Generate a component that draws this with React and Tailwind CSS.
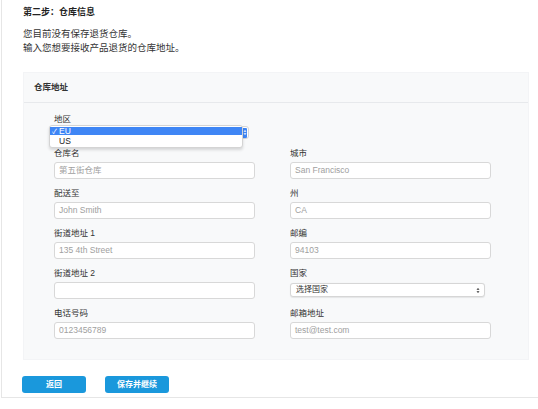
import React from 'react'

const font = { fontFamily: '"Liberation Sans", "Noto Sans CJK SC", sans-serif' }

function Stepper() {
  return (
    <svg width="4" height="7" viewBox="0 0 4 7" className="shrink-0">
      <path d="M0.5 2.8 L2 1 L3.5 2.8 Z" fill="#333" />
      <path d="M0.5 4.2 L2 6 L3.5 4.2 Z" fill="#333" />
    </svg>
  )
}

function Field({ label, placeholder, select }) {
  return (
    <div className="flex flex-col">
      <div className="h-[10px] leading-[10px] text-[8.5px] text-[#333] mb-[4px]">{label}</div>
      {select ? (
        <div className="w-[195px] h-[14px] mt-[1px] mb-[2px] bg-white border border-[#d6d6d6] rounded-[3px] flex items-center justify-between pl-[5px] pr-[4px] text-[8px] text-[#333] shadow-[0_0.5px_1px_rgba(0,0,0,0.08)]">
          <span>{placeholder}</span>
          <Stepper />
        </div>
      ) : (
        <div className="w-[201px] h-[17px] bg-white border border-[#d8d8d8] rounded-[3px] flex items-center pl-[4px] text-[8.5px] text-[#a0a0a0]">
          {placeholder}
        </div>
      )}
    </div>
  )
}

export default function App() {
  const left = [
    { label: '仓库名', placeholder: '第五街仓库' },
    { label: '配送至', placeholder: 'John Smith' },
    { label: '街道地址 1', placeholder: '135 4th Street' },
    { label: '街道地址 2', placeholder: '' },
    { label: '电话号码', placeholder: '0123456789' },
  ]
  const right = [
    { label: '城市', placeholder: 'San Francisco' },
    { label: '州', placeholder: 'CA' },
    { label: '邮编', placeholder: '94103' },
    { label: '国家', placeholder: '选择国家', select: true },
    { label: '邮箱地址', placeholder: 'test@test.com' },
  ]

  return (
    <div className="w-[538px] h-[409px] bg-white overflow-hidden" style={font}>
      <div className="ml-[1px] h-[398px] border-l border-b border-[#e6e6e6] pl-[21px]">
        <div className="pt-[6px] h-[18px] leading-[12px] text-[9px] font-bold text-[#222]">第二步：仓库信息</div>
        <div className="mt-[9px] text-[9.5px] leading-[14px] text-[#333]">
          <p>您目前没有保存退货仓库。</p>
          <p>输入您想要接收产品退货的仓库地址。</p>
        </div>

        {/* Panel */}
        <div className="mt-[17px] w-[506px] bg-[#f8f9fa] border border-[#f3f4f6]">
          <div className="h-[30px] flex items-center px-[10px] text-[8.5px] font-bold text-[#333] border-b border-[#e7e9ec]">
            仓库地址
          </div>
          <div className="pl-[30px] pt-[11px] pb-[20px]">
            {/* Region */}
            <div className="flex flex-col mb-[9px]">
              <div className="h-[10px] leading-[10px] text-[8.5px] text-[#333]">地区</div>
              <div className="relative mt-[2px] w-[195px] h-[13px] bg-white border border-[#d6d6d6] rounded-[3px] flex items-center justify-end pr-[1px]">
                <div className="w-[5px] h-[10px] bg-[#3f86f5] rounded-[1px] flex items-center justify-center">
                  <svg width="4" height="7" viewBox="0 0 4 7">
                    <path d="M0.5 2.8 L2 1 L3.5 2.8 Z" fill="#fff" />
                    <path d="M0.5 4.2 L2 6 L3.5 4.2 Z" fill="#fff" />
                  </svg>
                </div>
                <div className="absolute left-[-6px] top-[-2px] w-[194px] bg-white border border-[#d4d4d4] rounded-[3px] shadow-[0_2px_3px_rgba(0,0,0,0.14)] pt-[1px] pb-[2px] text-[8.5px] text-[#222]">
                  <div className="h-[8px] bg-[#3f86f5] text-white flex items-center pl-[2px] leading-none">
                    <span className="w-[7px] text-[7px]">✓</span>
                    <span>EU</span>
                  </div>
                  <div className="h-[8px] flex items-center pl-[9px] leading-none mt-[2px]">US</div>
                </div>
              </div>
            </div>

            <div className="grid grid-cols-[201px_201px] gap-x-[35px] gap-y-[9px]">
              {left.map((f, i) => (
                <React.Fragment key={f.label}>
                  <Field {...f} />
                  <Field {...right[i]} />
                </React.Fragment>
              ))}
            </div>
          </div>
        </div>

        {/* Buttons */}
        <div className="mt-[16px] flex gap-[19px] -ml-[1px]">
          <button className="w-[64px] h-[17px] rounded-[3px] bg-[#1a98dc] text-white text-[8px] font-bold">返回</button>
          <button className="w-[64px] h-[17px] rounded-[3px] bg-[#1a98dc] text-white text-[8px] font-bold">保存并继续</button>
        </div>
      </div>
    </div>
  )
}
